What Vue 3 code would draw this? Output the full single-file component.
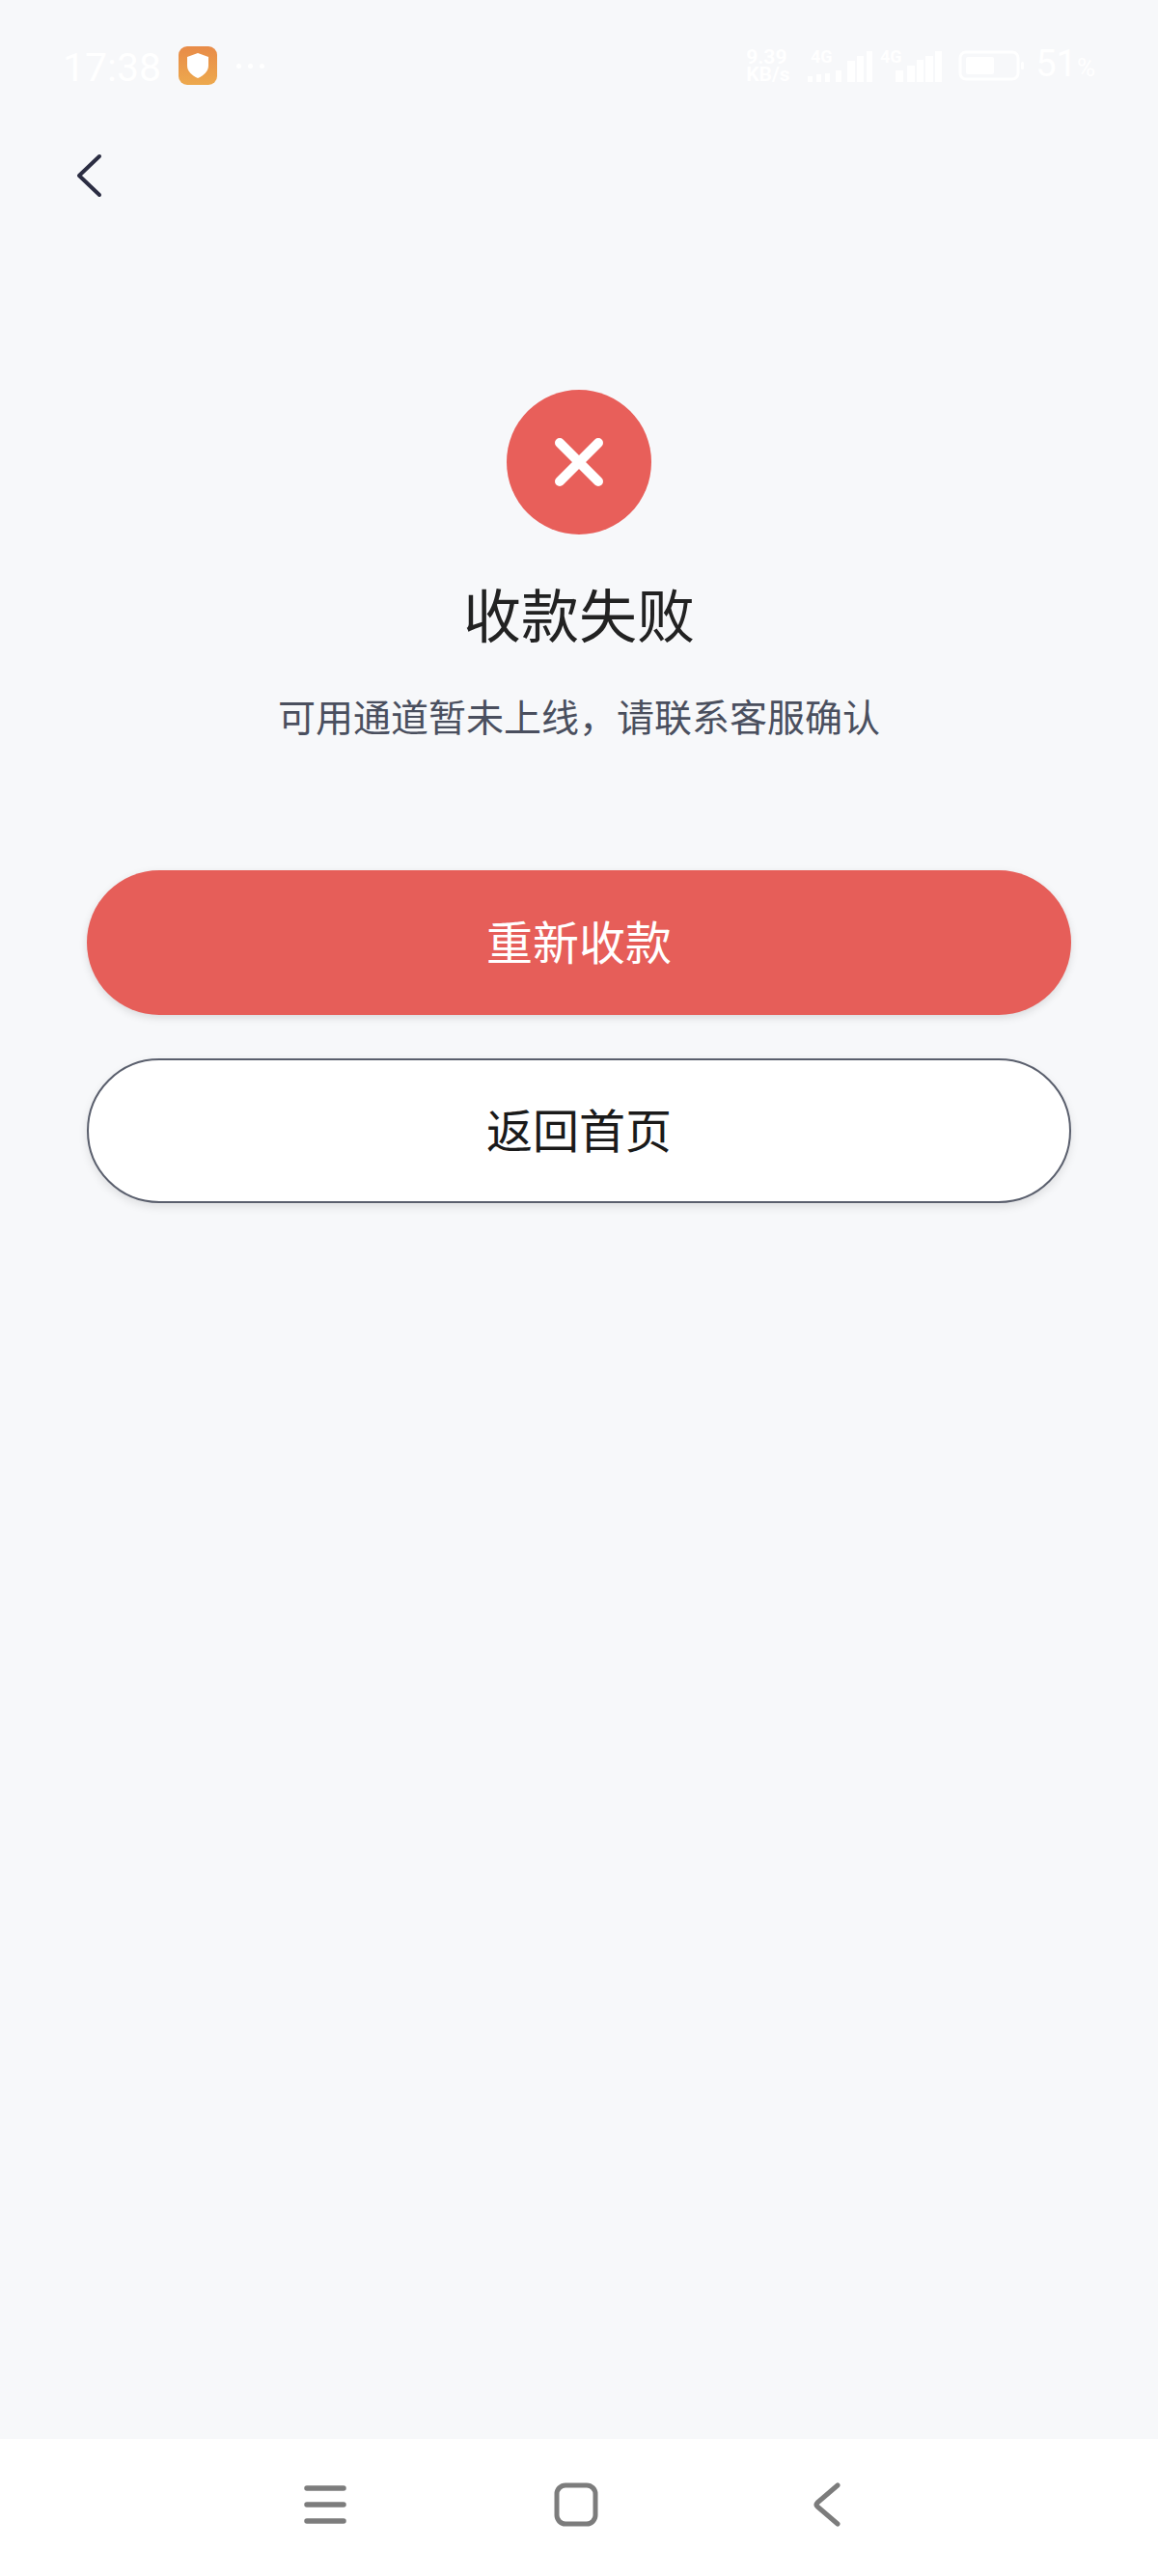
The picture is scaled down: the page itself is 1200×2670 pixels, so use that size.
<template>
  <div class="page">
    <!-- Status bar -->
    <div class="status-bar">
      <span class="clock">17:38</span>
      <span class="app-badge">
        <svg width="26" height="28" viewBox="0 0 26 28">
          <path d="M13 1 L24 5 V14 C24 20 19 24.500 13 27 C7 24.500 2 20 2 14 V5 Z" fill="#fff" />
        </svg>
      </span>
      <span class="dots">
        <i></i><i></i><i></i>
      </span>
      <span class="status-right">
        <span class="speed">9.39<br />KB/s</span>
        <svg class="signal" width="70" height="44" viewBox="0 -4 70 44">
          <text x="5" y="15" class="net">4G</text>
          <path d="M2 29h5v6H2zM11 27h5v8h-5zM20 26h5v9h-5zM31 23h6v12h-6zM43 13h8v22h-8zM53 8h7v27h-7zM63 3h6v32h-6z" fill="#fff" />
        </svg>
        <svg class="signal" width="65" height="44" viewBox="0 -4 65 44">
          <text x="0" y="15" class="net">4G</text>
          <path d="M16 23h8v12h-8zM28 18h8v17h-8zM38 12h7v23h-7zM47 8h8v27h-8zM57 3h7v32h-7z" fill="#fff" />
        </svg>
        <svg class="battery" width="69" height="32" viewBox="0 0 69 32">
          <rect x="2" y="2" width="60" height="28" rx="6" fill="none" stroke="#fff" stroke-width="3" />
          <rect x="8" y="7" width="29" height="18" rx="2" fill="#fff" />
          <rect x="65" y="12" width="3" height="8" rx="1.500" fill="#fff" />
        </svg>
        <span class="level">51<small>%</small></span>
      </span>
    </div>

    <!-- Header -->
    <div class="header">
      <svg width="29" height="48" viewBox="0 0 29 48">
        <path d="M25 4 L4 24 L25 44" fill="none" stroke="#2b2d42" stroke-width="4" stroke-linecap="round" stroke-linejoin="round" />
      </svg>
    </div>

    <!-- Result -->
    <main class="result">
      <div class="result-icon">
        <svg width="56" height="56" viewBox="0 0 56 56">
          <path d="M8 8 L48 48 M48 8 L8 48" stroke="#fff" stroke-width="10" stroke-linecap="round" />
        </svg>
      </div>
      <h1 class="result-title">{{ title }}</h1>
      <p class="result-desc">{{ desc }}</p>

      <button class="btn btn-primary">重新收款</button>
      <button class="btn btn-outline">返回首页</button>
    </main>

    <!-- System nav -->
    <nav class="nav-bar">
      <svg width="44" height="40" viewBox="0 0 44 40">
        <path d="M3 3 H41 M3 20 H41 M3 37 H41" stroke="#7c7c7c" stroke-width="5.500" stroke-linecap="round" />
      </svg>
      <svg width="46" height="46" viewBox="0 0 46 46">
        <rect x="3" y="3" width="40" height="40" rx="9" fill="none" stroke="#7c7c7c" stroke-width="5" />
      </svg>
      <svg width="30" height="46" viewBox="0 0 30 46">
        <path d="M26 3 L5 21 Q3 23 5 25 L26 43" fill="none" stroke="#7c7c7c" stroke-width="5" stroke-linecap="round" stroke-linejoin="round" />
      </svg>
    </nav>
  </div>
</template>

<script setup>
const title = '收款失败'
const desc = '可用通道暂未上线\uFF0C请联系客服确认'
</script>

<style>
html,
body {
  margin: 0;
  background: #f7f8fa;
}
</style>

<style scoped>
.page {
  display: flex;
  flex-direction: column;
  height: 2670px;
  background: #f7f8fa;
  font-family: "Noto Sans CJK SC", "Noto Sans", sans-serif;
}

.status-bar {
  display: flex;
  align-items: center;
  height: 48px;
  padding: 44px 65px 0 65px;
  color: #fff;
}

.clock {
  font-family: Roboto, sans-serif;
  font-size: 41px;
  line-height: 48px;
  width: 120px;
  padding-top: 4px;
}

.app-badge {
  display: flex;
  align-items: center;
  justify-content: center;
  width: 40px;
  height: 40px;
  border-radius: 9px;
  background: linear-gradient(#e88b48, #eda94e);
}

.dots {
  display: flex;
  gap: 7px;
  margin-left: 20px;
}

.dots i {
  width: 5px;
  height: 5px;
  border-radius: 50%;
  background: #fff;
}

.status-right {
  display: flex;
  align-items: center;
  margin-left: auto;
}

.speed {
  width: 62px;
  font-family: Roboto, sans-serif;
  font-size: 21px;
  font-weight: 700;
  line-height: 18px;
}

.signal {
  margin-right: 7px;
}

.net {
  font-family: Roboto, sans-serif;
  font-size: 18px;
  font-weight: 700;
  fill: #fff;
}

.battery {
  margin: 0 11px 0 9px;
}

.level {
  font-family: Roboto, sans-serif;
  font-size: 38px;
  line-height: 48px;
}

.level small {
  font-size: 26px;
}

.header {
  display: flex;
  height: 48px;
  padding: 66px 0 0 78px;
}

.result {
  flex: 1;
  display: flex;
  flex-direction: column;
  align-items: center;
  padding: 0 90px;
}

.result-icon {
  display: flex;
  align-items: center;
  justify-content: center;
  width: 150px;
  height: 150px;
  margin-top: 198px;
  border-radius: 50%;
  background: #e85f5a;
}

.result-title {
  margin: 41px 0 0;
  font-size: 60px;
  font-weight: 400;
  line-height: 80px;
  color: #222;
}

.result-desc {
  margin: 40px 0 0;
  font-size: 39px;
  line-height: 52px;
  color: #4a4f5e;
}

.btn {
  display: block;
  flex: none;
  width: 100%;
  height: 150px;
  border-radius: 75px;
  font-family: inherit;
  font-size: 48px;
  padding: 0 0 6px;
}

.btn-primary {
  margin-top: 135px;
  border: none;
  background: #e65e59;
  color: #fff;
  box-shadow: 0 3px 8px rgba(0, 0, 0, 0.12);
}

.btn-outline {
  margin-top: 45px;
  border: 2px solid #5a5f6d;
  background: #fff;
  color: #1a1a1a;
  box-shadow: 0 4px 10px rgba(0, 0, 0, 0.1);
}

.nav-bar {
  display: grid;
  grid-template-columns: repeat(3, auto);
  justify-content: start;
  align-items: center;
  column-gap: 215px;
  height: 142px;
  padding: 0 0 6px 315px;
  box-sizing: border-box;
  background: #fff;
}

.nav-bar svg:last-child {
  margin-left: 7px;
}
</style>
